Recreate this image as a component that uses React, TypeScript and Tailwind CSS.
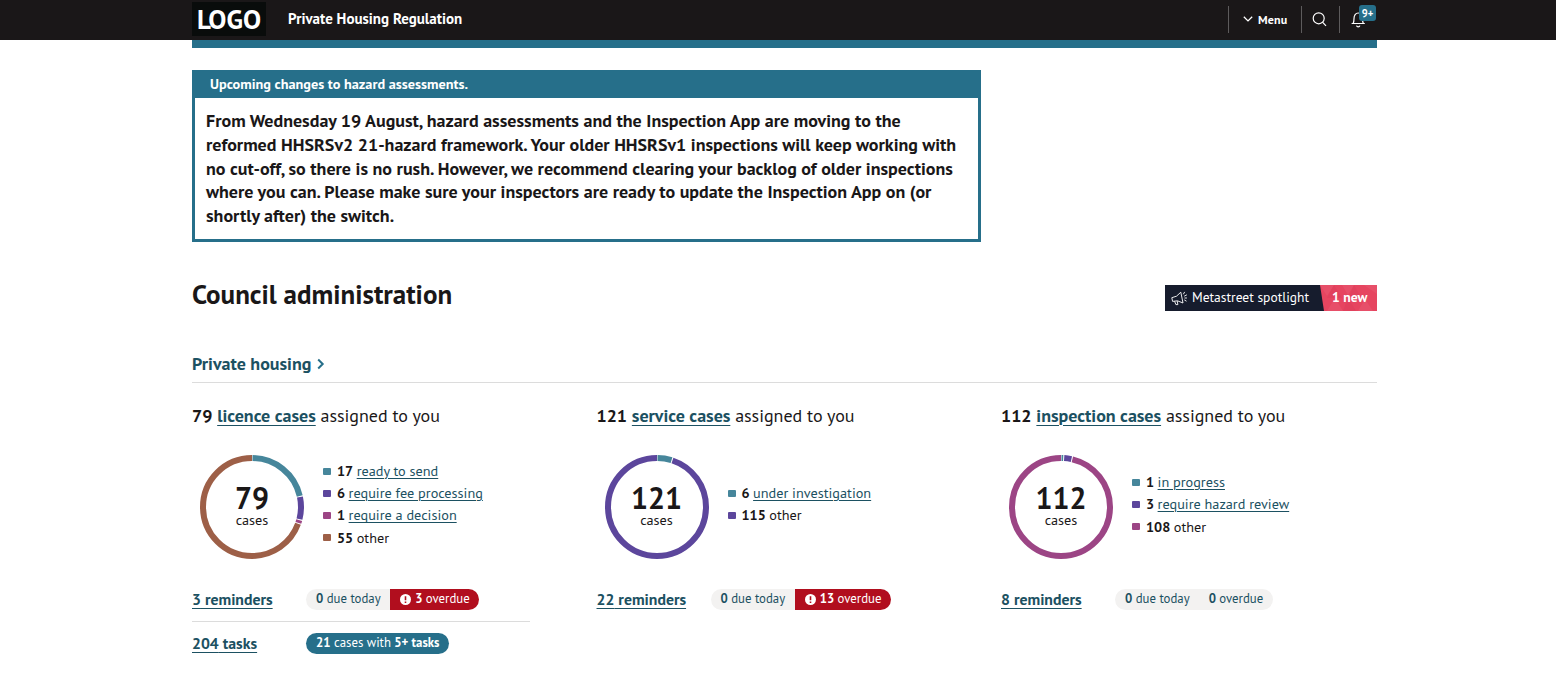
import React from "react";

type Segment = {
  value: number;
  label: string;
  color: string;
  link?: boolean;
};

type Column = {
  total: number;
  title: string;
  segments: Segment[];
  reminders: number;
  overdue: number;
  tasks?: number;
};

const TEAL = "#46869b";
const PURPLE = "#5c469c";
const PINK = "#9c4585";
const BROWN = "#9d5f47";

const columns: Column[] = [
  {
    total: 79,
    title: "licence cases",
    segments: [
      { value: 17, label: "ready to send", color: TEAL, link: true },
      { value: 6, label: "require fee processing", color: PURPLE, link: true },
      { value: 1, label: "require a decision", color: PINK, link: true },
      { value: 55, label: "other", color: BROWN },
    ],
    reminders: 3,
    overdue: 3,
    tasks: 204,
  },
  {
    total: 121,
    title: "service cases",
    segments: [
      { value: 6, label: "under investigation", color: TEAL, link: true },
      { value: 115, label: "other", color: PURPLE },
    ],
    reminders: 22,
    overdue: 13,
  },
  {
    total: 112,
    title: "inspection cases",
    segments: [
      { value: 1, label: "in progress", color: TEAL, link: true },
      { value: 3, label: "require hazard review", color: PURPLE, link: true },
      { value: 108, label: "other", color: PINK },
    ],
    reminders: 8,
    overdue: 0,
  },
];

const Donut = ({ total, segments }: { total: number; segments: Segment[] }) => {
  const r = 49;
  const length = 2 * Math.PI * r;
  let start = 0;
  return (
    <div className="relative w-[104px] h-[104px]">
      <svg width="104" height="104" viewBox="0 0 104 104">
        <g transform="rotate(-90 52 52)" fill="none" strokeWidth="6">
          {segments.map((s) => {
            const offset = (start / total) * length;
            const arc = (s.value / total) * length;
            start += s.value;
            return (
              <circle
                key={s.label}
                cx="52"
                cy="52"
                r={r}
                stroke={s.color}
                strokeDasharray={`${arc - 1} ${length - arc + 1}`}
                strokeDashoffset={-offset - 0.5}
              />
            );
          })}
        </g>
      </svg>
      <div className="absolute inset-0 flex flex-col items-center pt-7">
        <span className="text-[30px] leading-[30px] font-bold">{total}</span>
        <span className="text-[14.25px] leading-[13px]">cases</span>
      </div>
    </div>
  );
};

const CaseColumn = ({ column }: { column: Column }) => {
  return (
    <div className="w-[338px]">
      <h3 className="h-6 leading-6 text-[18px] tracking-[-0.02px] whitespace-nowrap">
        <b>{column.total}</b>{" "}
        <a
          href="#"
          className="font-bold text-[#1c5162] underline underline-offset-[3px] decoration-1"
        >
          {column.title}
        </a>{" "}
        assigned to you
      </h3>
      <div className="flex items-center mt-[27px] pl-2">
        <Donut total={column.total} segments={column.segments} />
        <ul className="ml-[19px] -mt-[6px]">
          {column.segments.map((s) => (
            <li
              key={s.label}
              className="flex items-center h-[22.3px] text-[14.25px] whitespace-nowrap"
            >
              <span
                className="w-2 h-[7px] rounded-[1px] mr-1.5 mt-px"
                style={{ backgroundColor: s.color }}
              />
              <b className="mr-[3.5px]">{s.value}</b>
              {s.link ? (
                <a
                  href="#"
                  className="text-[#1c5162] underline underline-offset-2 decoration-1"
                >
                  {s.label}
                </a>
              ) : (
                <span>{s.label}</span>
              )}
            </li>
          ))}
        </ul>
      </div>
      {/* reminders */}
      <div className="flex h-[21px] mt-[30px] items-center">
        <a
          href="#"
          className="w-[114px] -mt-0.5 text-[15.75px] leading-5 font-bold text-[#1c5162] underline underline-offset-[3px] decoration-1"
        >
          {column.reminders} reminders
        </a>
        <div className="flex h-[21px] rounded-full overflow-hidden bg-[#f3f2f1] text-[12.8px] leading-[19px] text-[#1c5162] whitespace-nowrap">
          <span className="pl-2.5 pr-[9.5px]">
            <b>0</b> due today
          </span>
          {column.overdue > 0 ? (
            <span className="flex gap-1 pl-2.5 pr-[9.5px] bg-[#b10e1e] text-white">
              <svg width="11" height="11" viewBox="0 0 11 11" className="mt-[5px]">
                <circle cx="5.5" cy="5.5" r="5.5" fill="#fff" />
                <path d="M5.5 2.2v4.1M5.5 7.4v1.5" stroke="#b10e1e" strokeWidth="1.6" />
              </svg>
              <span>
                <b>{column.overdue}</b> overdue
              </span>
            </span>
          ) : (
            <span className="px-[9.5px]">
              <b>0</b> overdue
            </span>
          )}
        </div>
      </div>
      {/* tasks */}
      {column.tasks && (
        <div className="flex items-center mt-[11px] pt-[11px] border-t border-[#dcdcdc]">
          <a
            href="#"
            className="w-[114px] -mt-0.5 text-[15.75px] leading-5 font-bold text-[#1c5162] underline underline-offset-[3px] decoration-1"
          >
            {column.tasks} tasks
          </a>
          <span className="h-[21px] px-2.5 rounded-full bg-[#266f8a] text-white text-[12.8px] leading-[19px] whitespace-nowrap">
            <b>21</b> cases with <b>5+ tasks</b>
          </span>
        </div>
      )}
    </div>
  );
};

const App = () => {
  return (
    <div className="h-[680px] overflow-hidden bg-white text-[#1a1718] font-['PT_Sans','Noto_Sans',sans-serif]">
      <header className="h-10 bg-[#1a1718] text-white">
        <div className="w-[1185px] ml-48 h-10 flex items-center">
          <div className="w-[74px] h-[34px] -mt-0.5 bg-[#090c0b] flex items-center justify-center text-[27px] leading-[34px] font-bold">
            LOGO
          </div>
          <span className="ml-[22px] -mt-px text-[15px] font-bold">
            Private Housing Regulation
          </span>
          <div className="ml-auto flex items-center h-[27px] -mt-0.5">
            <button className="flex items-center h-full w-[73px] border-l border-[#5d5b5c] pl-3.5 text-[12px] font-bold">
              <svg width="10" height="6" viewBox="0 0 10 6" className="mr-[5px]">
                <path d="M.8.7 5 4.900 9.200.7" fill="none" stroke="#fff" strokeWidth="1.3" />
              </svg>
              <span className="mt-0.5 tracking-[0.15px]">Menu</span>
            </button>
            <button className="flex items-center h-full w-[38px] border-l border-[#5d5b5c] pl-2.5">
              <svg width="15" height="15" viewBox="0 0 15 15" fill="none" stroke="#fff" strokeWidth="1.2">
                <circle cx="6.7" cy="6.3" r="5.5" />
                <path d="m10.5 10.200 3.500 3.700" />
              </svg>
            </button>
            <button className="relative flex items-center h-full w-[38px] border-l border-[#5d5b5c] pl-[11px]">
              <svg width="15" height="17" viewBox="0 0 15 17" fill="none" stroke="#fff" strokeWidth="1.2">
                <path d="M.6 12.500h13.200M2.200 12.300c.8-1.300.8-2.500.8-4.700 0-3.400 1.600-5.600 4.200-5.600s4.300 2.200 4.300 5.600c0 2.200 0 3.400.8 4.700M5.500 14.600c.5 1.600 2.900 1.600 3.400 0" />
              </svg>
              <span className="absolute left-[19px] -top-px w-[17px] h-4 rounded-[3px] bg-[#266f8a] text-[10.5px] leading-4 font-bold text-center">
                9+
              </span>
            </button>
          </div>
        </div>
      </header>
      <main className="w-[1185px] ml-48">
        <div className="h-2 bg-[#266f8a]" />
        <section className="mt-[22px] w-[789px] h-[172px] border-[3px] border-t-0 border-[#266f8a]">
          <h2 className="h-7 pl-[15px] leading-[27px] bg-[#266f8a] text-white text-[14.25px] font-bold">
            Upcoming changes to hazard assessments.
          </h2>
          <p className="pt-[11px] px-[11px] text-[18px] leading-[23.75px] font-bold">
            From Wednesday 19 August, hazard assessments and the Inspection App
            are moving to the reformed HHSRSv2 21-hazard framework. Your older
            HHSRSv1 inspections will keep working with no cut-off, so there is
            no rush. However, we recommend clearing your backlog of older
            inspections where you can. Please make sure your inspectors are
            ready to update the Inspection App on (or shortly after) the switch.
          </p>
        </section>
        <div className="flex items-start justify-between mt-9">
          <h1 className="-mt-px text-[27px] leading-[34px] font-bold">
            Council administration
          </h1>
          <a href="#" className="flex mt-[7px] w-[212px] h-[26px] bg-[#161c2d] text-white whitespace-nowrap">
            {/* megaphone */}
            <svg
              width="17"
              height="16"
              viewBox="0 0 17 16"
              className="ml-1.5 mt-[5px]"
              fill="none"
              stroke="#fff"
              strokeWidth="0.9"
              strokeLinejoin="round"
            >
              <path d="M.8 7.700 5.500 6.200 9.800 2.200 12 13 6.500 10.800 1.600 11.400ZM3.600 11.300l1.300 3.300h2L6.200 11M12.300 4.300l1.400-2.400M13.200 6.200l2.700-1.400M13.500 8h2.400M13.300 9.900l2.200 1.300" />
            </svg>
            <span className="ml-1 text-[13.5px] leading-6">
              Metastreet spotlight
            </span>
            <span className="relative ml-auto w-[57px] bg-[#e64560] [clip-path:polygon(0_0,100%_0,100%_100%,4px_100%)] pl-3 text-[13.7px] leading-6 font-bold">
              <svg width="57" height="26" viewBox="0 0 57 26" className="absolute inset-0" fill="#fff">
                <path d="M0 0h14L7 11ZM22 0h12l-6 10ZM44 0h13v9ZM7 26l8-13 8 13ZM38 26l7-12 8 12Z" opacity=".06" />
                <path d="m14 0 8 13H7ZM34 0l8 14H28ZM28 13l8 13H23Z" fill="#a81c45" opacity=".08" />
              </svg>
              <span className="relative">1 new</span>
            </span>
          </a>
        </div>
        <div className="flex items-center h-6 mt-10 text-[#1c5162]">
          <a href="#" className="text-[18px] font-bold">
            Private housing
          </a>
          <svg width="8" height="12" viewBox="0 0 8 12" className="ml-[5.5px] mt-px">
            <path d="m1.200 1.500 4.500 4.500-4.500 4.500" fill="none" stroke="#266f8a" strokeWidth="2" />
          </svg>
        </div>
        <div className="mt-[7px] border-t border-[#dcdcdc]" />
        <div className="grid grid-cols-[404.5px_404.5px_376px] mt-[21px]">
          {columns.map((column) => (
            <CaseColumn key={column.title} column={column} />
          ))}
        </div>
      </main>
    </div>
  );
};

export default App;
